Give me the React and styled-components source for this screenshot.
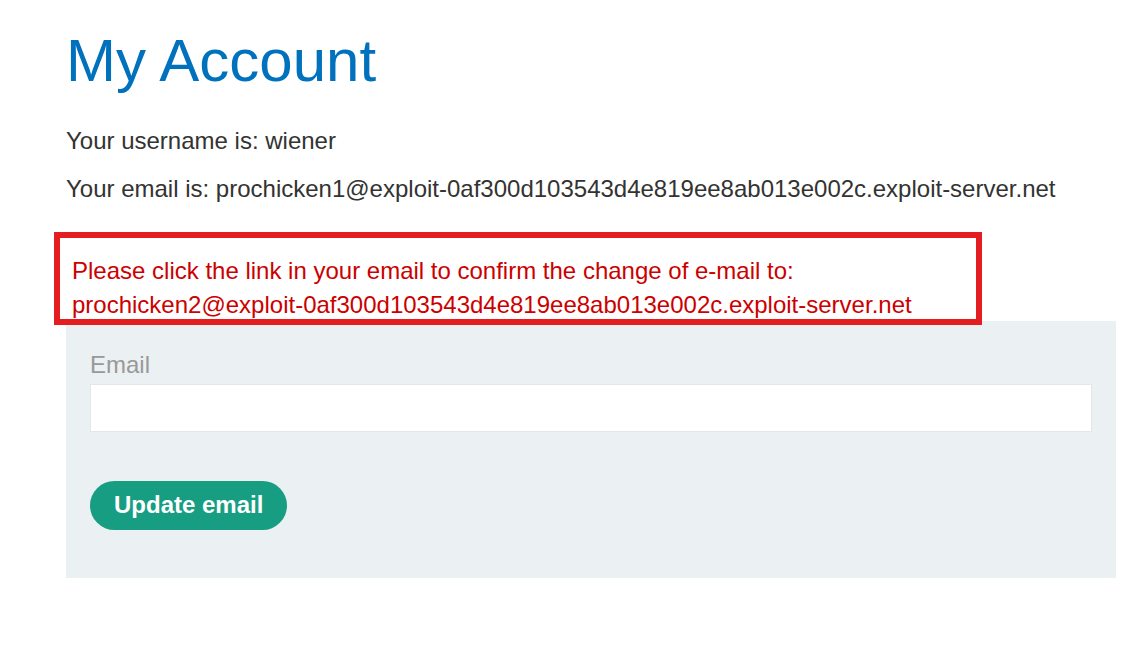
import styled, { createGlobalStyle } from "styled-components";

const GlobalStyle = createGlobalStyle`
    html, body {
        margin: 0;
        padding: 0;
        background: #ffffff;
        font-family: "Liberation Sans", Arial, sans-serif;
        color: #333332;
    }
    * {
        box-sizing: border-box;
    }
`;

const Page = styled.div`
    padding: 31px 0 0 66px;
    width: 1116px;
`;

const Title = styled.h1`
    margin: 0;
    font-size: 60px;
    line-height: 60px;
    font-weight: 400;
    color: #0071bc;
`;

const Info = styled.p`
    margin: ${(p) => p.$top}px 0 0 0;
    font-size: 24px;
    line-height: 33.6px;
`;

const Notice = styled.div`
    position: relative;
    z-index: 1;
    width: 928px;
    height: 93px;
    margin: 27px 0 -4px -12px;
    padding: 16px 0 0 12px;
    border: 6px solid #e41e20;
    font-size: 24px;
    line-height: 34px;
    color: #cc0000;
`;

const Panel = styled.form`
    background: #ebf0f2;
    padding: 27px 24px 48px 24px;
    display: flex;
    flex-direction: column;
    align-items: flex-start;
`;

const Label = styled.label`
    font-size: 24px;
    line-height: 33.6px;
    color: #999999;
`;

const Input = styled.input`
    margin-top: 2px;
    width: 100%;
    height: 48px;
    border: 1px solid #e6e6e6;
    background: #ffffff;
    outline: none;
    font-size: 24px;
    font-family: inherit;
`;

const Button = styled.button`
    margin-top: 49px;
    height: 49px;
    padding: 0 24px;
    border: none;
    border-radius: 25px;
    background: #179e82;
    color: #ffffff;
    font-family: inherit;
    font-size: 24px;
    font-weight: 700;
`;

export default function App() {
    return (
        <>
            <GlobalStyle />
            <Page>
                <Title>My Account</Title>
                <Info $top={33}>Your username is: wiener</Info>
                <Info $top={14}>Your email is: prochicken1@exploit-0af300d103543d4e819ee8ab013e002c.exploit-server.net</Info>
                <Notice>
                    Please click the link in your email to confirm the change of e-mail to:
                    <br />
                    prochicken2@exploit-0af300d103543d4e819ee8ab013e002c.exploit-server.net
                </Notice>
                <Panel onSubmit={(e) => e.preventDefault()}>
                    <Label htmlFor="email">Email</Label>
                    <Input id="email" type="email" name="email" />
                    <Button type="submit">Update email</Button>
                </Panel>
            </Page>
        </>
    );
}
